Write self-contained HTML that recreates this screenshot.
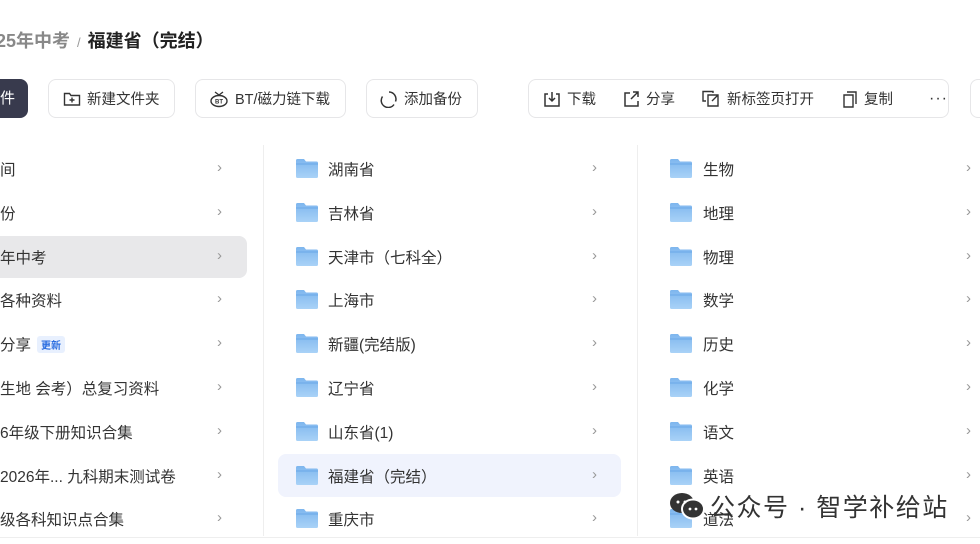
<!DOCTYPE html>
<html><head><meta charset="utf-8"><style>
*{margin:0;padding:0;box-sizing:border-box}
body{width:980px;height:544px;overflow:hidden;background:#fff;font-family:"Liberation Sans","Noto Sans CJK SC",sans-serif;color:#333;position:relative}
.a{position:absolute}
.crumb{left:-4px;top:27px;font-size:18px;font-weight:bold;color:#222;white-space:nowrap}
.crumb .g{color:#888}
.crumb .s{color:#999;font-weight:normal;margin:0 7px;font-size:13px}
.btn{top:79px;height:39px;border:1px solid #e6e6e8;border-radius:8px;display:flex;align-items:center;font-size:14.5px;color:#333;white-space:nowrap}
.btn svg{margin-right:6px}
.row{position:absolute;height:42px;display:flex;align-items:center;font-size:15.5px;color:#333;white-space:nowrap}
.chev{position:absolute;font-size:15px;color:#999}
.fold{position:absolute;width:22px;height:19px}
.vl{position:absolute;top:145px;bottom:8px;width:1px;background:#eee}
.tag{font-size:10px;color:#2a6de0;background:#e8f0fe;padding:1px 4px;border-radius:3px;margin-left:6px;font-weight:bold}
</style></head><body>
<div class="a crumb"><span class="g">25年中考</span><span class="s">/</span>福建省（完结）</div>

<div class="a" style="left:-10px;top:79px;width:38px;height:39px;background:#383a4d;border-radius:8px;color:#fff;font-size:15px;line-height:39px;padding-left:10px">件</div>
<div class="a btn" style="left:48px;width:127px;padding-left:14px"><svg width="18" height="16" viewBox="0 0 18 16"><path d="M1.5 2.5h5l1.5 2h8.5v9.5h-15z" fill="none" stroke="#333" stroke-width="1.4"/><path d="M9 6.5v5M6.5 9h5" stroke="#333" stroke-width="1.4"/></svg>新建文件夹</div>
<div class="a btn" style="left:195px;width:151px;padding-left:13px"><svg width="20" height="18" viewBox="0 0 20 18"><ellipse cx="10" cy="11" rx="8" ry="5.5" fill="none" stroke="#333" stroke-width="1.4"/><path d="M6 2l4 3 4-3" fill="none" stroke="#333" stroke-width="1.3"/><text x="10" y="13.5" font-size="6" text-anchor="middle" font-weight="bold" fill="#333" font-family="Liberation Sans">BT</text></svg>BT/磁力链下载</div>
<div class="a btn" style="left:366px;width:112px;padding-left:13px"><svg width="18" height="18" viewBox="0 0 18 18"><path d="M9 2a7 7 0 0 1 6.5 9.5M14 14.5A7 7 0 0 1 2.5 6.5" fill="none" stroke="#333" stroke-width="1.5"/></svg>添加备份</div>
<div class="a btn" style="left:528px;width:421px;padding-left:14px">
<svg width="18" height="18" viewBox="0 0 18 18"><path d="M5 4H2v12h14V4h-3M9 2v9M6 8l3 3 3-3" fill="none" stroke="#333" stroke-width="1.5"/></svg><span style="margin-right:26px">下载</span>
<svg width="18" height="18" viewBox="0 0 18 18"><path d="M8 3H3v13h13v-5M11 2h5v5M16 2l-7 7" fill="none" stroke="#333" stroke-width="1.5"/></svg><span style="margin-right:26px">分享</span>
<svg width="20" height="18" viewBox="0 0 20 18"><path d="M12 3V1.5H2V11h3M7 5h10v11H7zM11 11l6-6M13 5h4v4" fill="none" stroke="#333" stroke-width="1.4"/></svg><span style="margin-right:28px">新标签页打开</span>
<svg width="16" height="18" viewBox="0 0 16 18"><path d="M2 5h9v12H2zM5 2h9v12" fill="none" stroke="#333" stroke-width="1.4"/></svg><span style="margin-right:36px">复制</span>
<span style="font-size:16px;letter-spacing:1px">···</span></div>
<div class="a btn" style="left:970px;width:40px"></div>

<div class="vl" style="left:263px"></div>
<div class="vl" style="left:637px"></div>
<div class="a" style="left:0;right:0;top:537px;height:1px;background:#eee"></div>

<div class="a" style="left:-10px;top:236px;width:257px;height:42px;background:#e8e8ea;border-radius:8px"></div>
<div class="a" style="left:278px;top:454px;width:343px;height:43px;background:#f0f3fd;border-radius:8px"></div>

<div class="row" style="left:0;top:148px">间</div>
<div class="row" style="left:0;top:192px">份</div>
<div class="row" style="left:0;top:236px">年中考</div>
<div class="row" style="left:0;top:279px">各种资料</div>
<div class="row" style="left:0;top:323px">分享<span class="tag">更新</span></div>
<div class="row" style="left:0;top:367px">生地 会考）总复习资料</div>
<div class="row" style="left:0;top:411px">6年级下册知识合集</div>
<div class="row" style="left:0;top:455px">2026年... 九科期末测试卷</div>
<div class="row" style="left:0;top:498px">级各科知识点合集</div>

<svg width="0" height="0" style="position:absolute"><defs><linearGradient id="fg" x1="0" y1="0" x2="0" y2="1"><stop offset="0" stop-color="#7eb6ee"/><stop offset="1" stop-color="#a9d2f7"/></linearGradient></defs></svg>

<div id="cols"></div>
<script>
var L=[169,213,257,300,344,388,432,476,519];
var m=["湖南省","吉林省","天津市（七科全）","上海市","新疆(完结版)","辽宁省","山东省(1)","福建省（完结）","重庆市"];
var r=["生物","地理","物理","数学","历史","化学","语文","英语","道法"];
var h="";
var f='<svg class="fold" viewBox="0 0 22 19" style="left:X;top:Ypx"><path d="M0 1.5Q0 0 1.5 0H8l2 2.5h10.5Q22 2.5 22 4v13.5Q22 19 20.5 19h-19Q0 19 0 17.5z" fill="url(#fg)"/><path d="M0 5h22" stroke="#6aa8e8" stroke-width="1"/></svg>';
for(var i=0;i<9;i++){var y=L[i];
h+='<div class="chev" style="left:217px;top:'+(y-10)+'px">›</div>';
h+=f.replace("X","296px").replace("Y",y-10);
h+='<div class="row" style="left:328px;top:'+(y-21)+'px">'+m[i]+'</div><div class="chev" style="left:592px;top:'+(y-10)+'px">›</div>';
h+=f.replace("X","670px").replace("Y",y-10);
h+='<div class="row" style="left:703px;top:'+(y-21)+'px">'+r[i]+'</div><div class="chev" style="left:966px;top:'+(y-10)+'px">›</div>';}
document.getElementById("cols").innerHTML=h;
</script>
<div class="a" style="left:668px;top:488px;display:flex;align-items:center;font-size:25px;color:#333;white-space:nowrap">
<svg width="38" height="30" viewBox="0 0 38 30"><ellipse cx="14" cy="12" rx="12" ry="10" fill="#333"/><ellipse cx="25" cy="18" rx="11" ry="9.5" fill="#333" stroke="#fff" stroke-width="2"/><circle cx="10" cy="11" r="1.5" fill="#fff"/><circle cx="17" cy="11" r="1.5" fill="#fff"/><circle cx="22" cy="18" r="1.4" fill="#fff"/><circle cx="28" cy="18" r="1.4" fill="#fff"/></svg>
<span style="margin-left:4px;letter-spacing:1.5px">公众号 · 智学补给站</span></div>
</body></html>
